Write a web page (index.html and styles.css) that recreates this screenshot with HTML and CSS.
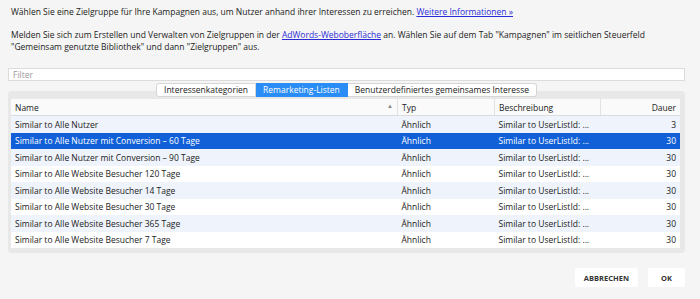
FILE: index.html
```html
<!DOCTYPE html>
<html lang="de">
<head>
    <meta charset="UTF-8">
    <meta name="viewport" content="width=device-width, initial-scale=1.0">
    <title>Zielgruppen</title>
    <link rel="stylesheet" href="styles.css">
</head>
<body>
    <div class="dialog">
        <p class="intro first">Wählen Sie eine Zielgruppe für Ihre Kampagnen aus, um Nutzer anhand ihrer Interessen zu erreichen. <a href="#">Weitere Informationen »</a></p>
        <p class="intro">Melden Sie sich zum Erstellen und Verwalten von Zielgruppen in der <a href="#">AdWords-Weboberfläche</a> an. Wählen Sie auf dem Tab "Kampagnen" im seitlichen Steuerfeld<br>"Gemeinsam genutzte Bibliothek" und dann "Zielgruppen" aus.</p>

        <input type="text" class="filter" placeholder="Filter">

        <div class="tabs">
            <span class="tab">Interessenkategorien</span>
            <span class="tab active">Remarketing-Listen</span>
            <span class="tab">Benutzerdefiniertes gemeinsames Interesse</span>
        </div>

        <div class="panel">
            <table class="lists">
                <thead>
                    <tr>
                        <th class="col-name">Name <span class="sort">▲</span></th>
                        <th class="col-type">Typ</th>
                        <th class="col-desc">Beschreibung</th>
                        <th class="col-days">Dauer</th>
                    </tr>
                </thead>
                <tbody>
                    <tr><td>Similar to Alle Nutzer</td><td>Ähnlich</td><td>Similar to UserListId: ...</td><td class="num">3</td></tr>
                    <tr class="selected"><td>Similar to Alle Nutzer mit Conversion – 60 Tage</td><td>Ähnlich</td><td>Similar to UserListId: ...</td><td class="num">30</td></tr>
                    <tr><td>Similar to Alle Nutzer mit Conversion – 90 Tage</td><td>Ähnlich</td><td>Similar to UserListId: ...</td><td class="num">30</td></tr>
                    <tr><td>Similar to Alle Website Besucher 120 Tage</td><td>Ähnlich</td><td>Similar to UserListId: ...</td><td class="num">30</td></tr>
                    <tr><td>Similar to Alle Website Besucher 14 Tage</td><td>Ähnlich</td><td>Similar to UserListId: ...</td><td class="num">30</td></tr>
                    <tr><td>Similar to Alle Website Besucher 30 Tage</td><td>Ähnlich</td><td>Similar to UserListId: ...</td><td class="num">30</td></tr>
                    <tr><td>Similar to Alle Website Besucher 365 Tage</td><td>Ähnlich</td><td>Similar to UserListId: ...</td><td class="num">30</td></tr>
                    <tr><td>Similar to Alle Website Besucher 7 Tage</td><td>Ähnlich</td><td>Similar to UserListId: ...</td><td class="num">30</td></tr>
                </tbody>
            </table>
        </div>

        <div class="actions">
            <button type="button" class="btn">ABBRECHEN</button>
            <button type="button" class="btn">OK</button>
        </div>
    </div>
</body>
</html>
```

FILE: styles.css
```css
/* General Styles */
body {
    margin: 0;
    background-color: #f5f5f5;
    font-family: "Open Sans", "Noto Sans", sans-serif;
    font-size: 8.5px;
    color: #222;
}

.dialog {
    padding: 6px 15px 0 8px;
}

.intro {
    margin: 0 0 0 3px;
    line-height: 12px;
}

.intro.first {
    margin-bottom: 11px;
}

.intro a {
    color: #2b2bd6;
}

.filter {
    display: block;
    box-sizing: border-box;
    width: 100%;
    height: 13px;
    margin-top: 15px;
    padding: 0 4px;
    font-family: inherit;
    font-size: 8.5px;
    background: #fff;
    border: 1px solid #dcdcdc;
}

.filter::placeholder {
    color: #9a9a9a;
}

/* Segmented tabs */
.tabs {
    display: flex;
    justify-content: center;
    margin-top: 2px;
    margin-bottom: -6px;
    position: relative;
    z-index: 1;
}

.tab {
    height: 12px;
    line-height: 12px;
    padding: 0 7px;
    background: #fff;
    border: 1px solid #d6d6d6;
    border-left: none;
    color: #222;
}

.tab:first-child {
    border-left: 1px solid #d6d6d6;
    border-radius: 3px 0 0 3px;
}

.tab:last-child {
    border-radius: 0 3px 3px 0;
}

.tab.active {
    background: #2a8cf5;
    border-color: #2a8cf5;
    color: #fff;
}

/* Table panel */
.panel {
    background: #e8e8e8;
    border-radius: 4px;
    padding: 8px 5px 5px 3px;
}

.lists {
    width: 100%;
    border-collapse: collapse;
    table-layout: fixed;
    background: #fff;
}

.lists th,
.lists td {
    height: 16px;
    padding: 0 4px;
    text-align: left;
    white-space: nowrap;
    overflow: hidden;
}

.lists th {
    font-weight: normal;
    background: #fafafa;
    border-bottom: 1px solid #dcdcdc;
    border-left: 1px solid #e2e2e2;
}

.lists th:first-child {
    border-left: none;
}

.col-name { width: 378px; }
.col-type { width: 88px; }
.col-desc { width: 97px; }

.sort {
    float: right;
    color: #888;
    font-size: 6px;
}

.lists .col-days,
.lists .num {
    text-align: right;
}

.lists td {
    height: 16.5px;
}

.lists tbody tr:nth-child(odd) {
    background: #eff3fb;
}

.lists tbody tr.selected {
    background: #1160d8;
    color: #fff;
}

/* Buttons */
.actions {
    display: flex;
    justify-content: flex-end;
    gap: 10px;
    margin-top: 15px;
}

.btn {
    height: 19px;
    padding: 0 9px;
    background: #fff;
    border: none;
    border-radius: 2px;
    font-family: inherit;
    font-size: 7.5px;
    font-weight: bold;
    color: #333;
    cursor: pointer;
}

.btn:last-child {
    width: 37px;
}
```
